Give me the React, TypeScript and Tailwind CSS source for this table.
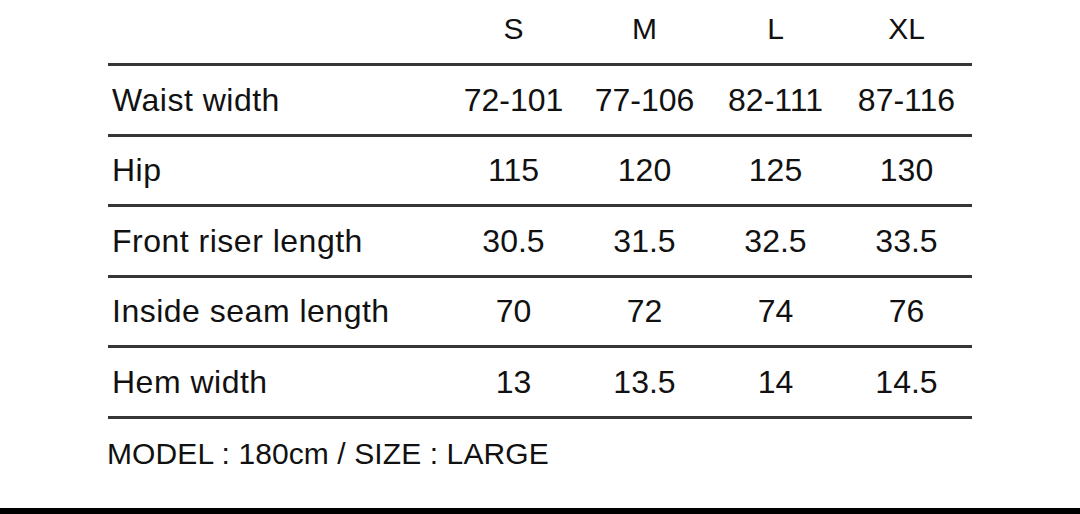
const sizes = ['S', 'M', 'L', 'XL']

const rows = [
  {label: 'Waist width', values: ['72-101', '77-106', '82-111', '87-116']},
  {label: 'Hip', values: ['115', '120', '125', '130']},
  {label: 'Front riser length', values: ['30.5', '31.5', '32.5', '33.5']},
  {label: 'Inside seam length', values: ['70', '72', '74', '76']},
  {label: 'Hem width', values: ['13', '13.5', '14', '14.5']},
]

export default function App() {
  return (
    <div className="w-[1080px] h-[514px] bg-white flex flex-col text-[#111] font-['Liberation_Sans',Arial,sans-serif] overflow-hidden">
      <div className="pl-[108px]">
        <div className="w-[864px]">
          {/* header */}
          <div className="grid grid-cols-[340px_repeat(4,131px)] h-[63px] items-center pb-[5px] text-[30px] leading-none">
            <div />
            {sizes.map((s) => (
              <div key={s} className="text-center">{s}</div>
            ))}
          </div>
          <div className="h-[3px] bg-[#363636]" />

          {rows.map((row) => (
            <div key={row.label}>
              <div className="grid grid-cols-[340px_repeat(4,131px)] h-[67.5px] items-center text-[32px] leading-none">
                <div className="pl-[4px] tracking-[0.5px]">{row.label}</div>
                {row.values.map((v, i) => (
                  <div key={i} className="text-center">{v}</div>
                ))}
              </div>
              <div className="h-[3px] bg-[#363636]" />
            </div>
          ))}

          <p className="mt-[20px] text-[30px] leading-none -ml-[1px] tracking-[0.1px]">MODEL : 180cm / SIZE : LARGE</p>
        </div>
      </div>
      <div className="flex-1" />
      <div className="h-[6px] bg-black" />
    </div>
  )
}
